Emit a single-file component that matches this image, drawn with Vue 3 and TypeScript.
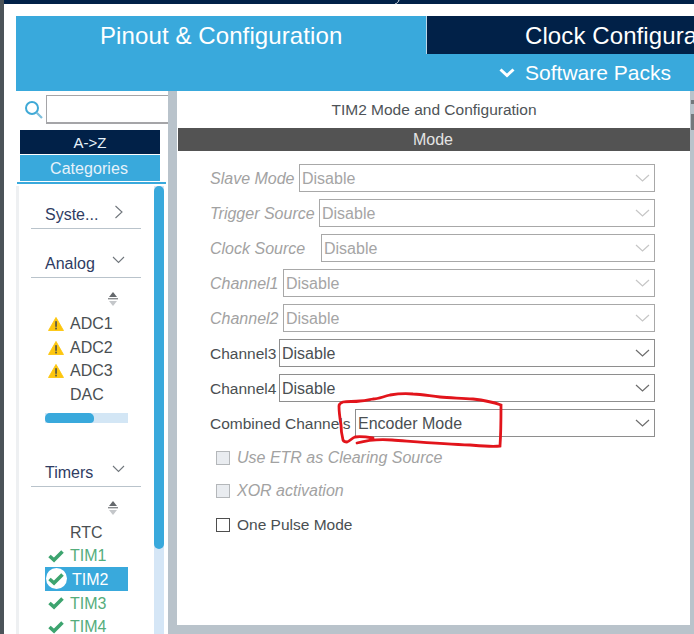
<script setup lang="ts">
interface FormRow {
  label: string;
  value: string;
  labelWidth: number;
  disabled: boolean;
}

interface SideItem {
  name: string;
  state?: 'warn' | 'ok';
  selected?: boolean;
}

const rows: FormRow[] = [
  { label: 'Slave Mode', value: 'Disable', labelWidth: 89, disabled: true },
  { label: 'Trigger Source', value: 'Disable', labelWidth: 109, disabled: true },
  { label: 'Clock Source', value: 'Disable', labelWidth: 111, disabled: true },
  { label: 'Channel1', value: 'Disable', labelWidth: 73, disabled: true },
  { label: 'Channel2', value: 'Disable', labelWidth: 73, disabled: true },
  { label: 'Channel3', value: 'Disable', labelWidth: 69, disabled: false },
  { label: 'Channel4', value: 'Disable', labelWidth: 69, disabled: false },
  { label: 'Combined Channels', value: 'Encoder Mode', labelWidth: 145, disabled: false },
];

const checks = [
  { label: 'Use ETR as Clearing Source', disabled: true },
  { label: 'XOR activation', disabled: true },
  { label: 'One Pulse Mode', disabled: false },
];

const analog: SideItem[] = [
  { name: 'ADC1', state: 'warn' },
  { name: 'ADC2', state: 'warn' },
  { name: 'ADC3', state: 'warn' },
  { name: 'DAC' },
];

const timers: SideItem[] = [
  { name: 'RTC' },
  { name: 'TIM1', state: 'ok' },
  { name: 'TIM2', state: 'ok', selected: true },
  { name: 'TIM3', state: 'ok' },
  { name: 'TIM4', state: 'ok' },
];

const groups = [
  { title: 'Analog', items: analog, bar: true },
  { title: 'Timers', items: timers, bar: false },
];
</script>

<template>
  <div class="page">
    <div class="edge"></div>
    <div class="shell">
      <div class="topline"></div>
      <div class="inner">
        <div class="tabs">
          <div class="tab active">Pinout &amp; Configuration</div>
          <div class="tab dark">Clock Configuration</div>
        </div>
        <div class="packs">
          <svg width="16" height="10" viewBox="0 0 16 10" class="packs-chev">
            <path d="M1.5 1.5 L8 7.5 L14.5 1.5" fill="none" stroke="#fff" stroke-width="3" />
          </svg>
          <span>Software Packs</span>
        </div>

        <div class="body">
          <aside class="sidebar">
            <div class="search">
              <svg width="20" height="20" viewBox="0 0 20 20">
                <circle cx="8" cy="8" r="6" fill="none" stroke="#3fa9d6" stroke-width="2" />
                <path d="M12.5 12.5 L18 18" stroke="#7dbfdc" stroke-width="2.2" />
              </svg>
              <div class="search-box"></div>
            </div>
            <div class="sort-btn az">A-&gt;Z</div>
            <div class="sort-btn cat">Categories</div>
            <div class="cat-line"></div>

            <div class="tree">
              <div class="list">
                <div class="sec-head first">
                  <span>Syste...</span>
                  <svg width="10" height="14" viewBox="0 0 10 14" class="chev-r">
                    <path d="M1.5 1 L8 7 L1.5 13" fill="none" stroke="#70767c" stroke-width="1.1" />
                  </svg>
                </div>

                <div v-for="g in groups" :key="g.title" class="group">
                  <div class="sec-head">
                    <span>{{ g.title }}</span>
                    <svg width="13" height="8" viewBox="0 0 13 8" class="chev-d">
                      <path d="M1 1 L6.5 6.5 L12 1" fill="none" stroke="#70767c" stroke-width="1.1" />
                    </svg>
                  </div>
                  <div class="sorter">
                    <svg width="10" height="16" viewBox="0 0 10 16">
                      <path d="M5 1 L9 6 L1 6 Z" fill="#65696d" />
                      <rect x="0" y="7" width="10" height="1.4" fill="#8a8d90" />
                      <path d="M1 10 L9 10 L5 15 Z" fill="#c4c7ca" />
                    </svg>
                  </div>
                  <div
                    v-for="it in g.items"
                    :key="it.name"
                    class="item"
                    :class="{ selected: it.selected, ok: it.state === 'ok' }"
                  >
                    <span class="slot">
                      <svg v-if="it.state === 'warn'" width="16" height="14" viewBox="0 0 17 15">
                        <path d="M8.5 0.5 L16.5 14.5 L0.5 14.5 Z" fill="#fdc60f" stroke="#fdc60f" stroke-linejoin="round" />
                        <rect x="7.6" y="4.5" width="1.9" height="6" fill="#5d5a45" />
                        <rect x="7.6" y="11.4" width="1.9" height="1.9" fill="#5d5a45" />
                      </svg>
                      <span v-if="it.selected" class="halo"></span>
                      <svg v-if="it.state === 'ok'" width="16" height="13" viewBox="0 0 16 13" class="tick">
                        <path d="M1.5 6 L6 10 L14.5 1.5" fill="none" stroke="#3da46f" stroke-width="3.6" />
                      </svg>
                    </span>
                    <span class="item-name">{{ it.name }}</span>
                  </div>
                  <div v-if="g.bar" class="hbar"><div class="hbar-thumb"></div></div>
                </div>
              </div>
              <div class="track"><div class="thumb"></div></div>
            </div>
          </aside>

          <div class="divider"></div>

          <main class="main">
            <div class="main-title">TIM2 Mode and Configuration</div>
            <div class="mode-head">Mode</div>
            <div class="form">
              <div v-for="r in rows" :key="r.label" class="row" :class="{ off: r.disabled }">
                <span class="row-label" :style="{ width: r.labelWidth + 'px' }">{{ r.label }}</span>
                <div class="select">
                  <span class="select-value">{{ r.value }}</span>
                  <svg width="15" height="8" viewBox="0 0 15 8">
                    <path d="M1 1 L7.5 7 L14 1" fill="none" stroke="currentColor" stroke-width="1.2" />
                  </svg>
                </div>
              </div>
            </div>
            <div class="checks">
              <label v-for="c in checks" :key="c.label" class="check" :class="{ off: c.disabled }">
                <span class="box"></span>
                <span>{{ c.label }}</span>
              </label>
            </div>
          </main>
          <div class="right-bar">
            <div class="grip small"></div>
            <div class="grip big"></div>
          </div>
        </div>
      </div>
    </div>

    <!-- hand-drawn annotation over the form -->
    <svg class="scribble" width="694" height="634" viewBox="0 0 694 634">
      <path
        d="M357 443 C368 440 380 439 392 440 C420 442 445 444 470 445 C482 446 492 447 500 446 C501 432 501 418 501 405 C490 401 482 400 473 399 C460 398 450 398 440 397 C430 396 422 394 413 394 C404 393 396 394 390 395 C382 397 378 399 373 399 C368 400 365 401 360 401 C354 402 348 401 343 402 C340 403 339 404 339 406 C339 412 340 419 341 425 C341 431 342 436 343 440 C344 442 345 442 347 442 C350 441 352 438 355 437 C361 436 367 437 373 438"
        fill="none"
        stroke="#e2141b"
        stroke-width="2.8"
        stroke-linecap="round"
      />
    </svg>
    <svg class="glitch" width="8" height="5" viewBox="0 0 8 5">
      <path d="M6 0 C5.5 2 4 3.5 2 4" fill="none" stroke="#dfe5ea" stroke-width="1" />
    </svg>
  </div>
</template>

<style scoped>
.page {
  position: relative;
  display: flex;
  width: 694px;
  height: 634px;
  overflow: hidden;
  background: #fff;
  font-family: "Liberation Sans", Arial, sans-serif;
  font-size: 16px;
  color: #4a4f52;
}
.edge {
  width: 4px;
  flex: none;
  background: #4c5459;
}
.shell {
  flex: 1;
  display: flex;
  flex-direction: column;
  min-width: 0;
}
.topline {
  height: 4px;
  flex: none;
  background: #012148;
}
.inner {
  flex: 1;
  min-height: 0;
  display: flex;
  flex-direction: column;
  padding: 12px 0 0 12px;
}
.tabs {
  display: flex;
  height: 38px;
  flex: none;
}
.tab {
  font-size: 24px;
  letter-spacing: 0.1px;
  color: #fff;
  line-height: 40px;
  white-space: nowrap;
  overflow: hidden;
}
.tab.active {
  width: 410px;
  flex: none;
  padding-left: 84px;
  box-sizing: border-box;
  background: #39a9dc;
}
.tab.dark {
  flex: 1;
  padding-left: 98px;
  background: #012148;
  border-left: 1px solid #bcd7e8;
}
.packs {
  height: 37px;
  flex: none;
  display: flex;
  align-items: center;
  justify-content: flex-end;
  gap: 10px;
  padding-right: 23px;
  box-sizing: border-box;
  background: #39a9dc;
  color: #fff;
  font-size: 21px;
}
.packs-chev {
  margin-top: 1px;
}
.body {
  flex: 1;
  min-height: 0;
  display: flex;
}
.sidebar {
  width: 152px;
  flex: none;
  display: flex;
  flex-direction: column;
  overflow: hidden;
}
.search {
  height: 33px;
  flex: none;
  display: flex;
  align-items: center;
  padding: 3px 0 0 8px;
  box-sizing: border-box;
  gap: 2px;
}
.search svg {
  flex: none;
  margin-top: 1px;
}
.search-box {
  flex: 1;
  height: 29px;
  box-sizing: border-box;
  border: 1px solid #a5a5a8;
  border-right: none;
  border-bottom-width: 2px;
  background: #fff;
}
.sort-btn {
  flex: none;
  width: 140px;
  margin-left: 4px;
  text-align: center;
  color: #e6f2fa;
}
.az {
  height: 24px;
  margin-top: 6px;
  line-height: 26px;
  font-size: 15px;
  background: #012148;
}
.cat {
  height: 26px;
  margin-top: 1px;
  line-height: 28px;
  letter-spacing: 0.05px;
  text-indent: -2px;
  background: #39a9dc;
}
.cat-line {
  flex: none;
  width: 149px;
  height: 2px;
  margin: 1px 0 0 1px;
  background: #39a9dc;
}
.tree {
  flex: 1;
  min-height: 0;
  display: flex;
  margin-top: 2px;
  border-left: 3px solid #eef0f2;
}
.list {
  width: 135px;
  flex: none;
  padding-left: 12px;
  box-sizing: border-box;
  overflow: hidden;
}
.sec-head {
  position: relative;
  width: 110px;
  height: 30px;
  box-sizing: border-box;
  padding: 7px 0 0 14px;
  border-bottom: 1.5px solid #b9c3cb;
  color: #2f3c63;
}
.sec-head.first {
  margin-top: 13px;
}
.chev-r {
  position: absolute;
  left: 83px;
  top: 6px;
}
.chev-d {
  position: absolute;
  left: 81px;
  top: 8px;
}
.group {
  margin-top: 19px;
}
.group + .group {
  margin-top: 34px;
}
.sorter {
  display: flex;
  width: 87px;
  justify-content: flex-end;
  margin-top: 13px;
  height: 20px;
}
.item {
  display: flex;
  align-items: center;
  width: 83px;
  height: 23.7px;
  margin-left: 14px;
}
.item-name {
  padding-top: 2px;
}
.slot {
  position: relative;
  flex: none;
  width: 25px;
  height: 100%;
  display: flex;
  align-items: center;
  padding: 2px 0 0 3px;
  box-sizing: border-box;
}
.tick {
  position: relative;
}
.halo {
  position: absolute;
  left: 1px;
  top: 1px;
  width: 21px;
  height: 21px;
  border-radius: 50%;
  background: #fff;
}
.item.ok {
  color: #55ad7c;
}
.item.selected {
  color: #fff;
  background: #39a9dc;
}
.item.selected .item-name {
  margin-left: 2px;
}
.hbar {
  width: 83px;
  height: 10px;
  margin: 7px 0 0 14px;
  background: #d3e6f5;
}
.hbar-thumb {
  width: 49px;
  height: 100%;
  border-radius: 5px 5px 4px 4px;
  background: #39a9dc;
}
.track {
  width: 10px;
  flex: none;
  background: #d5e6f6;
}
.thumb {
  height: 363px;
  border-radius: 5px;
  background: #39a9dc;
}
.divider {
  width: 9px;
  flex: none;
  background: #b9c3cb;
}
.main {
  flex: 1;
  min-width: 0;
  display: flex;
  flex-direction: column;
  border-bottom: 9px solid #b9c3cb;
  padding-left: 1px;
}
.main-title {
  height: 37px;
  flex: none;
  line-height: 38px;
  text-align: center;
  font-size: 15.5px;
  color: #4e5357;
}
.mode-head {
  height: 23px;
  flex: none;
  line-height: 23px;
  padding-right: 2px;
  text-align: center;
  color: #e4e4e4;
  background: #535353;
}
.form {
  display: flex;
  flex-direction: column;
  gap: 7px;
  padding: 13px 35px 0 32px;
}
.row {
  display: flex;
  align-items: center;
  height: 28px;
}
.row-label {
  flex: none;
  padding-top: 2px;
  font-size: 15.5px;
  white-space: nowrap;
}
.select {
  flex: 1;
  height: 28px;
  box-sizing: border-box;
  display: flex;
  align-items: center;
  justify-content: space-between;
  padding: 0 4px 0 2px;
  border: 1px solid #8e8e8e;
  background: #fff;
}
.select-value {
  padding-top: 2px;
}
.select svg {
  color: #6d6d6d;
}
.row.off .row-label {
  font-size: 16px;
  font-style: italic;
  color: #a2a2a2;
}
.row.off .select {
  color: #a5a5a5;
  border-color: #a8a8a8;
}
.row.off .select svg {
  color: #c6c6c6;
}
.checks {
  display: flex;
  flex-direction: column;
  padding: 4px 0 0 38px;
}
.check {
  display: flex;
  align-items: center;
  gap: 7px;
  height: 33.5px;
  font-size: 15.5px;
}
.box {
  flex: none;
  width: 14px;
  height: 14px;
  box-sizing: border-box;
  border: 1.5px solid #4e4e4e;
  background: #fff;
}
.check.off {
  font-size: 16px;
  font-style: italic;
  color: #a2a2a2;
}
.check.off .box {
  border-color: #b4b7ba;
  background: #e9ecf0;
}
.right-bar {
  width: 4px;
  flex: none;
  background: #b9c3cb;
}
.grip {
  margin-left: 1px;
  background: #73787c;
}
.grip.small {
  height: 4px;
  margin-top: 9px;
}
.grip.big {
  height: 16px;
  margin-top: 10px;
}
.scribble {
  position: absolute;
  left: 0;
  top: 0;
  pointer-events: none;
}
.glitch {
  position: absolute;
  left: 393px;
  top: 0;
}
</style>
